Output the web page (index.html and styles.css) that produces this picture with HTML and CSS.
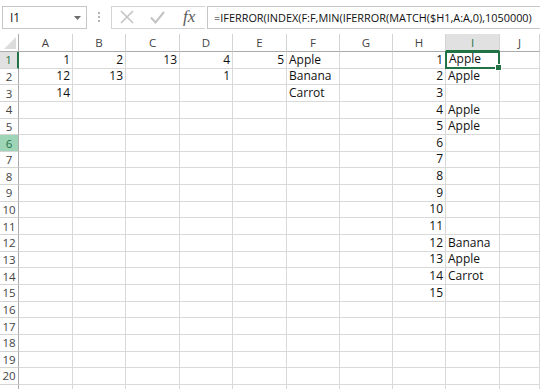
FILE: index.html
```html
<!DOCTYPE html>
<html lang="en">
<head>
    <meta charset="UTF-8">
    <meta name="viewport" content="width=device-width, initial-scale=1.0">
    <title>Sheet1 - Excel</title>
    <link rel="stylesheet" href="styles.css">
</head>
<body>
    <div class="formula-bar">
        <div class="name-box">
            <span>I1</span>
            <svg class="caret" width="7" height="4" viewBox="0 0 7 4"><path d="M0 0h7L3.5 4z" fill="#6d6d6d"/></svg>
        </div>
        <div class="grip">
            <span></span><span></span><span></span>
        </div>
        <div class="fx-buttons">
            <svg width="14" height="14" viewBox="0 0 14 14"><path d="M1 1l12 12M13 1L1 13" stroke="#c3c3c3" stroke-width="1.6" fill="none"/></svg>
            <svg width="15" height="13" viewBox="0 0 15 13"><path d="M1 6.5l4.5 5L14 1" stroke="#c3c3c3" stroke-width="2" fill="none"/></svg>
            <span class="fx">fx</span>
        </div>
        <div class="formula">=IFERROR(INDEX(F:F,MIN(IFERROR(MATCH($H1,A:A,0),1050000)</div>
    </div>

    <div class="sheet" id="sheet"></div>

    <script>
        const cols = ['A', 'B', 'C', 'D', 'E', 'F', 'G', 'H', 'I', 'J'];
        const data = {
            1: { A: 1, B: 2, C: 13, D: 4, E: 5, F: 'Apple', H: 1, I: 'Apple' },
            2: { A: 12, B: 13, D: 1, F: 'Banana', H: 2, I: 'Apple' },
            3: { A: 14, F: 'Carrot', H: 3 },
            4: { H: 4, I: 'Apple' },
            5: { H: 5, I: 'Apple' },
            6: { H: 6 },
            7: { H: 7 },
            8: { H: 8 },
            9: { H: 9 },
            10: { H: 10 },
            11: { H: 11 },
            12: { H: 12, I: 'Banana' },
            13: { H: 13, I: 'Apple' },
            14: { H: 14, I: 'Carrot' },
            15: { H: 15 }
        };

        const sheet = document.getElementById('sheet');
        let html = '<div class="corner"><span class="tri"></span></div>';
        cols.forEach(c => {
            html += `<div class="col-head${c === 'I' ? ' active' : ''}">${c}</div>`;
        });
        // row 21 is only a sliver at the bottom edge, so no label
        for (let r = 1; r <= 21; r++) {
            let cls = 'row-head';
            if (r === 1) cls += ' active';
            if (r === 6) cls += ' hover';
            html += `<div class="${cls}">${r < 21 ? r : ''}</div>`;
            cols.forEach(c => {
                const v = (data[r] || {})[c];
                let cellCls = 'cell';
                if (typeof v === 'number') cellCls += ' num';
                if (r === 1 && c === 'I') cellCls += ' selected';
                html += `<div class="${cellCls}">${v === undefined ? '' : v}</div>`;
            });
        }
        sheet.innerHTML = html;
    </script>
</body>
</html>
```

FILE: styles.css
```css
body {
    margin: 0;
    padding: 0;
    background: #fff;
    font-family: "Open Sans", "Noto Sans", sans-serif;
    overflow: hidden;
    width: 540px;
    height: 389px;
}
.formula-bar {
    display: flex;
    align-items: center;
    height: 34px;
    padding-left: 2px;
    box-sizing: border-box;
}
.name-box {
    width: 85px;
    height: 23px;
    box-sizing: border-box;
    border: 1px solid #c6c6c6;
    display: flex;
    align-items: center;
    justify-content: space-between;
    padding: 0 5px 0 7px;
    font-size: 12px;
    color: #222;
}
.name-box .caret {
    margin-top: 1px;
}
.grip {
    width: 24px;
    display: flex;
    flex-direction: column;
    align-items: center;
    gap: 2px;
}
.grip span {
    width: 2px;
    height: 2px;
    background: #b5b5b5;
}
.fx-buttons {
    width: 94px;
    height: 23px;
    box-sizing: border-box;
    border: 1px solid #d4d4d4;
    border-right: none;
    display: flex;
    align-items: center;
    padding-left: 8px;
    gap: 16px;
}
.fx {
    font-family: "Liberation Serif", serif;
    font-style: italic;
    font-size: 17px;
    color: #5a5a5a;
    margin-left: 2px;
}
.formula {
    flex: 1;
    min-width: 0;
    height: 23px;
    margin-left: 2px;
    box-sizing: border-box;
    border: 1px solid #c6c6c6;
    border-right: none;
    display: flex;
    align-items: center;
    padding-left: 6px;
    font-size: 10.9px;
    color: #111;
    white-space: nowrap;
    overflow: hidden;
}
.sheet {
    display: grid;
    grid-template-columns: 19px 54px 53px 54px 53px 54px 53px 53px 53px 54px 40px;
    grid-template-rows: 18px;
    grid-auto-rows: 16.65px;
    font-size: 12px;
    color: #111;
}
.sheet > div {
    box-sizing: border-box;
    overflow: hidden;
    white-space: nowrap;
}
.corner {
    border-right: 1px solid #ababab;
    border-bottom: 1px solid #ababab;
    position: relative;
}
.corner .tri {
    position: absolute;
    right: 2px;
    bottom: 2px;
    width: 0;
    height: 0;
    border-left: 12px solid transparent;
    border-bottom: 12px solid #dcdcdc;
}
.col-head {
    border-right: 1px solid #d4d4d4;
    border-bottom: 1px solid #ababab;
    display: flex;
    align-items: center;
    justify-content: center;
    color: #444;
    font-size: 11.5px;
}
.col-head.active {
    background: #e1e1e1;
    border-bottom: 2px solid #217346;
    color: #217346;
}
.row-head {
    border-right: 1px solid #ababab;
    border-bottom: 1px solid #d4d4d4;
    display: flex;
    align-items: center;
    justify-content: center;
    color: #444;
    font-size: 11.5px;
}
.row-head.active {
    background: #e1e1e1;
    border-right: 2px solid #217346;
    color: #217346;
}
.row-head.hover {
    background: #9fd5b7;
    color: #217346;
}
.cell {
    border-right: 1px solid #d9d9d9;
    border-bottom: 1px solid #d9d9d9;
    display: flex;
    align-items: flex-end;
    padding: 0 2px 1px 2px;
    line-height: 15px;
}
.cell.num {
    justify-content: flex-end;
}
.cell.selected {
    border: 2px solid #217346;
    position: relative;
    overflow: visible !important;
    margin: -1px 0 0 -1px;
    padding-left: 2px;
}
.cell.selected::after {
    content: "";
    position: absolute;
    right: -4px;
    bottom: -4px;
    width: 5px;
    height: 5px;
    background: #217346;
    border: 1px solid #fff;
}
```
